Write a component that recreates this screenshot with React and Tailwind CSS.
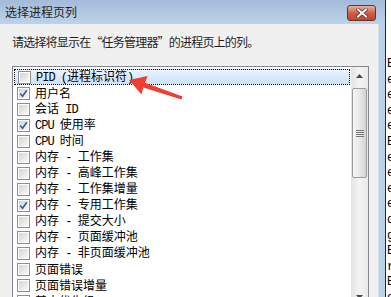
const ITEMS = [
  { label: 'PID (进程标识符)', focus: true },
  { label: '用户名', checked: true },
  { label: '会话 ID' },
  { label: 'CPU 使用率', checked: true },
  { label: 'CPU 时间' },
  { label: '内存 - 工作集' },
  { label: '内存 - 高峰工作集' },
  { label: '内存 - 工作集增量' },
  { label: '内存 - 专用工作集', checked: true },
  { label: '内存 - 提交大小' },
  { label: '内存 - 页面缓冲池' },
  { label: '内存 - 非页面缓冲池' },
  { label: '页面错误' },
  { label: '页面错误增量' },
  { label: '基本优先级' },
];

// bits of the window behind the dialog
const BEHIND = ['E', 'e', 'e', 'e', 'e', 'E', 'e', 'e', 'e', 'e', 'd', 'g', 'B', 'r', 'E', 'e'];

// latin runs are narrower (half-width) than the CJK ones
function Label({ text }) {
  return text.split(/([\x20-\x7e]+)/).filter(Boolean).map((part, i) =>
    /^[\x20-\x7e]+$/.test(part) ? (
      <span
        key={i}
        className="tracking-[-1px] whitespace-pre"
        style={{ fontFamily: '"Liberation Mono", monospace' }}
      >
        {part}
      </span>
    ) : (
      <span key={i}>{part}</span>
    )
  );
}

function Checkbox({ checked }) {
  return (
    <div className="w-[13px] h-[13px] border border-[#8e8f8f] bg-white shrink-0 p-px">
      <div className="w-full h-full bg-gradient-to-br from-[#d4d4d4] to-[#f8f8f8] flex items-center justify-center">
        {checked && (
          <svg width="9" height="9" viewBox="0 0 9 9">
            <path d="M1.2 4.6 L3.6 7.2 L7.8 1.2" fill="none" stroke="#3c5a98" strokeWidth="1.6" />
          </svg>
        )}
      </div>
    </div>
  );
}

export default function App() {
  return (
    <div
      className="relative w-[391px] h-[297px] flex overflow-hidden bg-white text-[#1e1e1e]"
      style={{ fontFamily: '"Noto Sans CJK SC", sans-serif' }}
    >
      {/* dialog */}
      <div className="w-[385px] shrink-0 flex flex-col bg-[#b9d1ea]">
        <div className="h-[24px] shrink-0 flex items-center justify-between pl-[5px] pr-[9px] bg-gradient-to-b from-[#a3bbd8] to-[#bdd3eb]">
          <span className="text-[12px] leading-none">选择进程页列</span>
          <div className="w-[29px] h-[16px] mt-[2px] rounded-[3px] border border-[#6e3126] bg-gradient-to-b from-[#e6b2a6] via-[#cc5f49] to-[#bf4630] flex items-center justify-center">
            <svg width="12" height="10" viewBox="0 0 12 10">
              <path d="M2 1.5 L10 8.5 M10 1.5 L2 8.5" stroke="#5a2a24" strokeWidth="3.4" strokeLinecap="square" />
              <path d="M2 1.5 L10 8.5 M10 1.5 L2 8.5" stroke="#ffffff" strokeWidth="2" strokeLinecap="square" />
            </svg>
          </div>
        </div>

        <div className="flex-1 flex min-h-0">
          <div className="w-[378px] shrink-0 bg-[#f0f0f0] pl-[12px] pt-[10px] overflow-hidden">
            <p className="text-[12px] leading-[16px] tracking-[-0.8px] mb-[16px] whitespace-nowrap">
              请选择将显示在“任务管理器”的进程页上的列。
            </p>

            <div className="w-[357px] h-[240px] border border-[#828790] bg-white flex">
              <div className="flex-1 px-px pt-[2px]">
                {ITEMS.map(item => (
                  <div
                    key={item.label}
                    className={`h-[16px] flex items-center pl-[3px] gap-[5px] ${
                      item.focus
                        ? 'border border-dotted border-black bg-gradient-to-b from-[#eaf3fe] to-[#cbe2fb] pl-[2px]'
                        : ''
                    }`}
                  >
                    <Checkbox checked={item.checked} />
                    <span className="text-[12px] leading-none whitespace-nowrap text-black">
                      <Label text={item.label} />
                    </span>
                  </div>
                ))}
              </div>

              {/* scrollbar */}
              <div className="w-[17px] shrink-0 flex flex-col bg-gradient-to-r from-[#e4e4e4] via-[#f4f4f4] to-[#e9e9e9]">
                <div className="h-[17px] flex items-center justify-center">
                  <svg width="7" height="4" viewBox="0 0 7 4">
                    <path d="M0 4 L3.5 0 L7 4 Z" fill="#4a4a4a" />
                  </svg>
                </div>
                <div className="mt-[4px] ml-px w-[15px] h-[90px] rounded-[2px] border border-[#9c9c9c] bg-gradient-to-r from-[#f4f4f4] via-[#e9e9e9] to-[#d3d3d3] flex flex-col items-center justify-center gap-px">
                  <div className="w-[8px] h-px bg-[#777]" />
                  <div className="w-[8px] h-px bg-[#777]" />
                  <div className="w-[8px] h-px bg-[#777]" />
                  <div className="w-[8px] h-px bg-[#777]" />
                </div>
                <div className="flex-1" />
                <div className="h-[17px] flex items-center justify-center">
                  <svg width="7" height="4" viewBox="0 0 7 4">
                    <path d="M0 0 L3.5 4 L7 0 Z" fill="#4a4a4a" />
                  </svg>
                </div>
              </div>
            </div>
          </div>
          <div className="flex-1 border-l border-[#d6dde6]" />
        </div>
      </div>

      <div className="w-px shrink-0 bg-[#2a2a2a]" />
      <div className="flex-1 overflow-hidden pt-[57px] pl-px">
        {BEHIND.map((c, i) => (
          <div
            key={i}
            className="text-[12px] leading-[15.6px] text-black"
            style={{ fontFamily: '"Liberation Mono", monospace' }}
          >
            {c}
          </div>
        ))}
      </div>

      {/* red annotation arrow */}
      <svg className="absolute left-0 top-0 pointer-events-none" width="391" height="297">
        <polygon
          points="129,80 147.5,76 145,82.8 182.5,96.5 181.5,99.5 143.4,87.6 141.5,94.5"
          fill="#ef3d2f"
        />
      </svg>
    </div>
  );
}
